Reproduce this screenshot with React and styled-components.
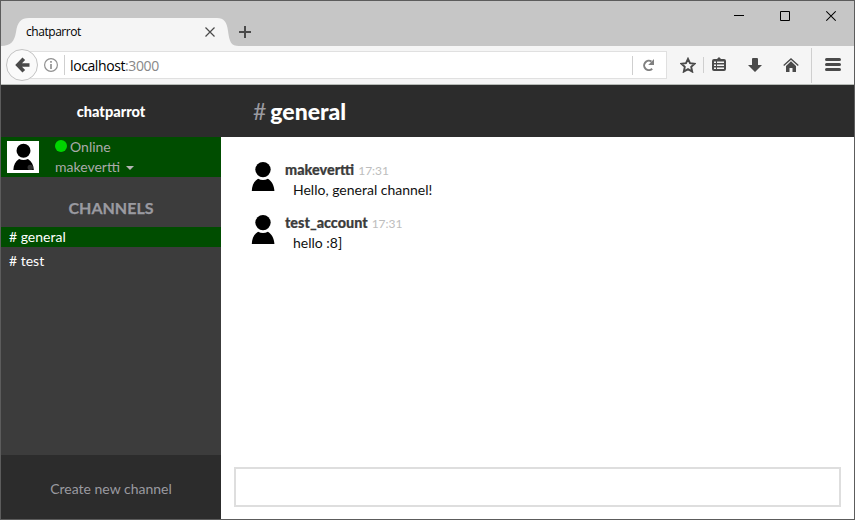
import React from "react";
import styled, { createGlobalStyle } from "styled-components";

const GlobalStyle = createGlobalStyle`
  *, *::before, *::after { box-sizing: border-box; }
  body { margin: 0; background: #fff; }
  svg { display: block; flex: none; }
`;

const Window = styled.div`
  width: 855px;
  height: 520px;
  border: 1px solid #5c5c5c;
  display: flex;
  flex-direction: column;
  overflow: hidden;
  background: #fff;
  font-family: "Lato", sans-serif;
  font-size: 14px;
`;

const TitleBar = styled.div`
  height: 45px;
  flex: none;
  display: flex;
  align-items: flex-start;
  background: #c6c6c6;
`;

const Tab = styled.div`
  position: relative;
  width: 238px;
  height: 28px;
  margin-top: 17px;
  display: flex;
  align-items: center;
  justify-content: space-between;
  padding: 0 24px 0 25px;
`;

const TabShape = styled.svg`
  position: absolute;
  inset: 0;
`;

const TabTitle = styled.span`
  position: relative;
  font: 12px/16px "Open Sans", sans-serif;
  letter-spacing: -0.45px;
  color: #000;
`;

const TabClose = styled.svg`
  position: relative;
`;

const NewTab = styled.svg`
  margin: 25px 0 0;
`;

const WindowControls = styled.div`
  margin: 9px 18px 0 auto;
  display: flex;
  gap: 36px;
`;

const NavBar = styled.div`
  height: 39px;
  flex: none;
  display: flex;
  align-items: center;
  background: #f5f5f5;
  border-bottom: 1px solid #b6bab6;
  padding-left: 5px;
`;

const BackButton = styled.div`
  position: relative;
  z-index: 1;
  width: 32px;
  height: 32px;
  flex: none;
  border: 1px solid #c3c3c3;
  border-radius: 50%;
  background: #fafafa;
  display: flex;
  align-items: center;
  justify-content: center;
`;

const AddressBar = styled.div`
  width: 646px;
  height: 28px;
  flex: none;
  margin-left: -17px;
  padding: 0 10px 0 22px;
  border: 1px solid #e0e0e0;
  background: #fff;
  display: flex;
  align-items: center;
`;

const InfoSegment = styled.div`
  width: 20px;
  flex: none;
`;

const Rule = styled.div`
  width: 1px;
  height: ${(p) => p.$height}px;
  flex: none;
  background: #cfcfcf;
`;

const Address = styled.span`
  flex: 1;
  padding: 2px 0 0 5px;
  font: 14px/18px "Open Sans", sans-serif;
  letter-spacing: -0.4px;
  color: #000;
`;

const Port = styled.span`
  color: #888;
`;

const ToolIcons = styled.div`
  flex: 1;
  height: 38px;
  padding-left: 13px;
  display: flex;
  align-items: center;
`;

const ToolSlot = styled.div`
  width: ${(p) => p.$width}px;
  flex: none;
  display: flex;
  justify-content: ${(p) => p.$align || "center"};
`;

const AppBody = styled.div`
  flex: 1;
  min-height: 0;
  display: flex;
`;

const Sidebar = styled.aside`
  width: 220px;
  flex: none;
  display: flex;
  flex-direction: column;
  background: #3c3c3c;
`;

const Brand = styled.div`
  height: 52px;
  flex: none;
  background: #2c2c2c;
  color: #fff;
  font-size: 14.6px;
  font-weight: 900;
  line-height: 20px;
  padding-top: 17px;
  text-align: center;
`;

const Profile = styled.div`
  height: 40px;
  flex: none;
  display: flex;
  background: #004d00;
  padding: 4px 0 0 6px;
`;

const ProfilePicture = styled.div`
  width: 32px;
  height: 32px;
  background: #fff;
  padding: 1px 0 0 1.5px;
`;

const ProfileText = styled.div`
  margin: -4px 0 0 16px;
  color: #aaa;
  line-height: 20px;
`;

const ProfileLine = styled.div`
  display: flex;
  align-items: center;
  height: 20px;
`;

const StatusDot = styled.i`
  width: 12px;
  height: 12px;
  margin: -2px 3px 0 0;
  border-radius: 50%;
  background: #00d400;
`;

const Caret = styled.i`
  margin: 2px 0 0 6px;
  border: 4px solid transparent;
  border-top-color: #b5b5b5;
  border-bottom: 0;
`;

const ChannelsTitle = styled.h2`
  margin: 21px 0 9px;
  font-size: 16px;
  line-height: 20px;
  font-weight: 700;
  text-align: center;
  color: #9a9aa0;
  -webkit-text-stroke: 0.25px #9a9aa0;
`;

const Channel = styled.div`
  height: 20px;
  margin-bottom: 4px;
  padding-left: 8px;
  line-height: 20px;
  color: #fff;
  background: ${(p) => (p.$active ? "#004d00" : "transparent")};
`;

const CreateChannel = styled.div`
  height: 64px;
  margin-top: auto;
  background: #2c2c2c;
  color: #9a9aa0;
  text-align: center;
  line-height: 68px;
`;

const Main = styled.main`
  flex: 1;
  display: flex;
  flex-direction: column;
`;

const ChannelHeader = styled.header`
  height: 52px;
  flex: none;
  background: #2c2c2c;
  color: #fff;
  padding: 10px 0 0 32px;
  font-size: 23px;
  line-height: 32px;
  font-weight: 900;
`;

const Hash = styled.span`
  font-weight: 400;
  color: #9a9aa0;
  margin-right: 4px;
`;

const Messages = styled.div`
  flex: 1;
  padding-top: 23px;
`;

const Message = styled.div`
  height: 53px;
  padding-left: 26px;
  display: flex;
`;

const MessageText = styled.div`
  margin-left: 6px;
`;

const MessageHead = styled.div`
  height: 20px;
  line-height: 20px;
`;

const Author = styled.span`
  font-size: 14.4px;
  font-weight: 900;
  color: #3c3c3c;
  -webkit-text-stroke: 0.2px #3c3c3c;
`;

const Time = styled.span`
  margin-left: 4px;
  font-size: 12px;
  color: #bdbdbd;
`;

const MessageBody = styled.div`
  padding-left: 8px;
  line-height: 20px;
  color: #111;
`;

const Composer = styled.input`
  width: 607px;
  height: 40px;
  flex: none;
  margin: 0 13px 12px;
  border: 2px solid #dedede;
  background: #fff;
  outline: none;
`;

function Person({ size = 32, badge }) {
  return (
    <svg width={size} height={size} viewBox="0 0 32 32">
      <circle cx="16" cy="9.6" r="7.7" />
      <path d="M4.800 31c.2-5.500 2.300-9.800 6.300-12.300 3 1.700 6.800 1.700 9.800 0 4 2.500 6.300 6.800 6.500 12.300z" />
      {badge && <circle cx="23.500" cy="28" r="3" fill="#303030" />}
    </svg>
  );
}

const messages = [
  { author: "makevertti", time: "17:31", body: "Hello, general channel!" },
  { author: "test_account", time: "17:31", body: "hello :8]" },
];

export default function App() {
  return (
    <>
      <GlobalStyle />
      <Window>
        <TitleBar>
          <Tab>
            <TabShape width="238" height="28">
              <path d="M0 28C10 28 13.500 23 15 14 16.500 4 20 0 28 0H216C223 0 226 4 227 13 228.500 24 230 28 238 28Z" fill="#f5f5f5" />
            </TabShape>
            <TabTitle>chatparrot</TabTitle>
            <TabClose width="10" height="10" stroke="#4a4a4a" strokeWidth="1.200">
              <path d="M.5.5l9 9M9.500.5l-9 9" />
            </TabClose>
          </Tab>
          <NewTab width="12" height="12" stroke="#4a4a4a" strokeWidth="2">
            <path d="M0 6h12M6 0v12" />
          </NewTab>
          <WindowControls>
            <svg width="10" height="12" stroke="#000"><path d="M0 5.500h10" /></svg>
            <svg width="10" height="12" fill="none" stroke="#000"><path d="M.5 1.500h9v9h-9z" /></svg>
            <svg width="10" height="12" stroke="#000" strokeWidth="1.100"><path d="M.3 1.300l9.400 9.400M9.700 1.300l-9.400 9.400" /></svg>
          </WindowControls>
        </TitleBar>
        <NavBar>
          <BackButton>
            <svg width="15" height="16" fill="none" stroke="#4a4a4a" strokeWidth="3.700">
              <path d="M8.800 1.700 2.800 8l6 6.300M3 8h11.500" />
            </svg>
          </BackButton>
          <AddressBar>
            <InfoSegment>
              <svg width="14" height="14" fill="none" stroke="#919191">
                <circle cx="7" cy="7" r="6.400" strokeWidth="1.200" />
                <path d="M7 6v5M7 3v1.700" strokeWidth="1.700" />
              </svg>
            </InfoSegment>
            <Rule $height={20} />
            <Address>localhost<Port>:3000</Port></Address>
            <Rule $height={19} />
            <ToolSlot $width={23} $align="flex-end">
              <svg width="13" height="12" fill="none" stroke="#808080" strokeWidth="2">
                <path d="M9.200 9.700A4.700 4.700 0 1 1 8.500 2.500" />
                <path d="M11 0v6H5.200z" fill="#808080" stroke="none" />
              </svg>
            </ToolSlot>
          </AddressBar>
          <ToolIcons>
            <ToolSlot $width={16}>
              <svg width="16" height="16" fill="none" stroke="#4a4a4a" strokeWidth="1.900">
                <path d="M8 1.900l2 4.300 4.700.5-3.500 3.200 1 4.700L8 12.200l-4.200 2.400 1-4.700L1.300 6.700l4.700-.5z" />
              </svg>
            </ToolSlot>
            <ToolSlot $width={15}><Rule $height={16} /></ToolSlot>
            <ToolSlot $width={16}>
              <svg width="14" height="16" fill="#4a4a4a">
                <path d="M2 2h3L7 0l2 2h3q2 0 2 2v8q0 2-2 2H2q-2 0-2-2V4q0-2 2-2z" />
                <path d="M2 4.500h2V6H2zm3 0h7V6H5zM2 7.500h2V9H2zm3 0h7V9H5zm-3 3h2V12H2zm3 0h7V12H5z" fill="#f5f5f5" />
              </svg>
            </ToolSlot>
            <ToolSlot $width={56}>
              <svg width="14" height="14" fill="#4a4a4a"><path d="M4 1q0-1 1-1h4q1 0 1 1v6h4l-7 7-7-7h4z" /></svg>
            </ToolSlot>
            <ToolSlot $width={16}>
              <svg width="16" height="14">
                <path d="M.7 7.500 8 .9l7.300 6.600" fill="none" stroke="#4a4a4a" strokeWidth="1.300" />
                <path d="M3 8l5-4.700L13 8v6H9.500v-4h-3v4H3z" fill="#4a4a4a" />
              </svg>
            </ToolSlot>
            <ToolSlot $width={25}><Rule $height={35} /></ToolSlot>
            <ToolSlot $width={18}>
              <svg width="16" height="14" stroke="#4a4a4a" strokeWidth="3" strokeLinecap="round">
                <path d="M1.500 1.500h13M1.500 6.500h13M1.500 11.500h13" />
              </svg>
            </ToolSlot>
          </ToolIcons>
        </NavBar>
        <AppBody>
          <Sidebar>
            <Brand>chatparrot</Brand>
            <Profile>
              <ProfilePicture><Person size={29} badge /></ProfilePicture>
              <ProfileText>
                <ProfileLine><StatusDot />Online</ProfileLine>
                <ProfileLine>makevertti<Caret /></ProfileLine>
              </ProfileText>
            </Profile>
            <ChannelsTitle>CHANNELS</ChannelsTitle>
            <Channel $active># general</Channel>
            <Channel># test</Channel>
            <CreateChannel>Create new channel</CreateChannel>
          </Sidebar>
          <Main>
            <ChannelHeader><Hash>#</Hash>general</ChannelHeader>
            <Messages>
              {messages.map((m) => (
                <Message key={m.author}>
                  <Person />
                  <MessageText>
                    <MessageHead><Author>{m.author}</Author><Time>{m.time}</Time></MessageHead>
                    <MessageBody>{m.body}</MessageBody>
                  </MessageText>
                </Message>
              ))}
            </Messages>
            <Composer aria-label="Message" />
          </Main>
        </AppBody>
      </Window>
    </>
  );
}
